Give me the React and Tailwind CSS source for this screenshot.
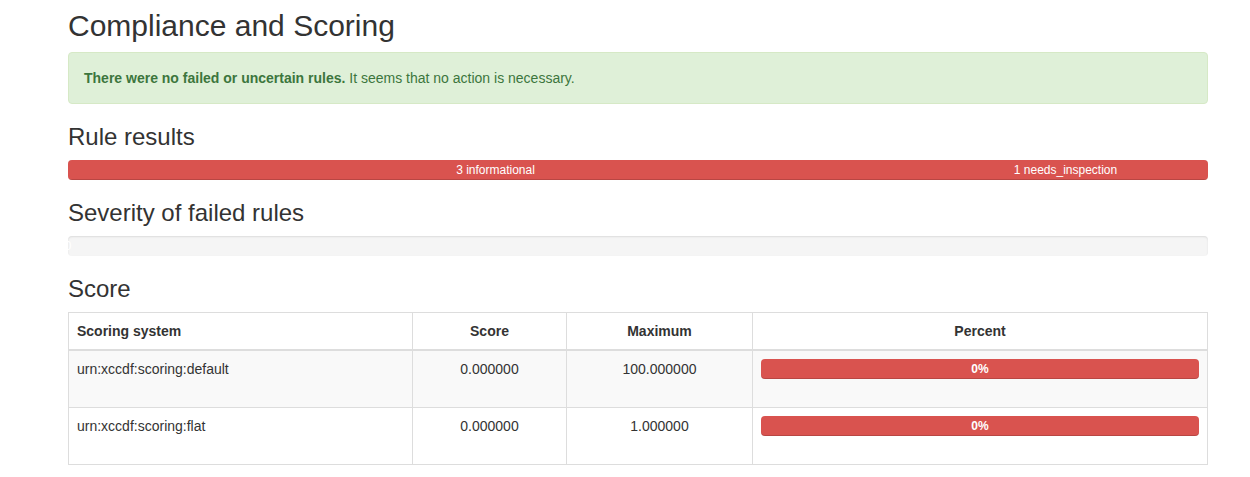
export default function App() {
  const rows = [
    { sys: "urn:xccdf:scoring:default", score: "0.000000", max: "100.000000", striped: true },
    { sys: "urn:xccdf:scoring:flat", score: "0.000000", max: "1.000000", striped: false },
  ];
  const bar = "bg-[#d9534f] text-white text-[12px] leading-[20px] text-center shadow-[inset_0_-1px_0_rgba(0,0,0,0.15)]";
  return (
    <div className="bg-white min-h-[477px] text-[14px] leading-[20px] text-[#333] font-['Liberation_Sans',Arial,sans-serif]">
      <div className="ml-[68px] w-[1140px] pt-[9px]">
        <h2 className="text-[30px] leading-[33px] mb-[10px] font-medium">Compliance and Scoring</h2>
        <div className="p-[15px] border border-[#d6e9c6] bg-[#dff0d8] text-[#3c763d] rounded-[4px] mb-[20px]">
          <strong className="font-bold">There were no failed or uncertain rules.</strong> It seems that no action is necessary.
        </div>

        <h3 className="text-[24px] leading-[26px] mb-[10px] font-medium">Rule results</h3>
        <div className="h-[20px] mb-[20px] bg-[#f5f5f5] rounded-[4px] shadow-[inset_0_1px_2px_rgba(0,0,0,0.1)] overflow-hidden flex">
          <div className={bar} style={{ width: "75%" }}>3 informational</div>
          <div className={bar} style={{ width: "25%" }}>1 needs_inspection</div>
        </div>

        <h3 className="text-[24px] leading-[26px] mb-[10px] font-medium">Severity of failed rules</h3>
        <div className="h-[20px] mb-[20px] bg-[#f5f5f5] rounded-[4px] shadow-[inset_0_1px_2px_rgba(0,0,0,0.1)] overflow-hidden flex">
          <div className="w-0 flex justify-center bg-[#d9534f] text-white text-[12px] leading-[20px] whitespace-nowrap">
            <span>0</span>
          </div>
        </div>

        <h3 className="text-[24px] leading-[26px] mb-[10px] font-medium">Score</h3>
        <table className="w-full table-fixed border-collapse border border-[#ddd] mb-[20px]">
          <thead>
            <tr>
              <th className="w-[344px] border border-[#ddd] border-b-2 p-[8px] text-left font-bold align-bottom">Scoring system</th>
              <th className="w-[154px] border border-[#ddd] border-b-2 p-[8px] text-center font-bold align-bottom">Score</th>
              <th className="w-[186px] border border-[#ddd] border-b-2 p-[8px] text-center font-bold align-bottom">Maximum</th>
              <th className="border border-[#ddd] border-b-2 p-[8px] text-center font-bold align-bottom">Percent</th>
            </tr>
          </thead>
          <tbody>
            {rows.map((r) => (
              <tr key={r.sys} className={r.striped ? "bg-[#f9f9f9]" : ""}>
                <td className="border border-[#ddd] p-[8px] align-top">{r.sys}</td>
                <td className="border border-[#ddd] p-[8px] align-top text-center">{r.score}</td>
                <td className="border border-[#ddd] p-[8px] align-top text-center">{r.max}</td>
                <td className="border border-[#ddd] p-[8px] align-top">
                  <div className="h-[20px] mb-[20px] bg-[#d9534f] rounded-[4px] overflow-hidden shadow-[inset_0_-1px_0_rgba(0,0,0,0.15)] text-white text-[12px] leading-[20px] text-center font-bold">
                    0%
                  </div>
                </td>
              </tr>
            ))}
          </tbody>
        </table>
      </div>
    </div>
  );
}
